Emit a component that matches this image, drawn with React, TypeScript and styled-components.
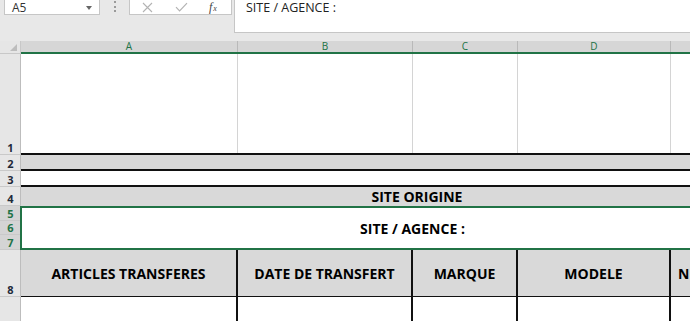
import React from 'react';
import styled, { createGlobalStyle } from 'styled-components';

const GlobalStyle = createGlobalStyle`
    html, body {
        margin: 0;
        padding: 0;
        background: #ffffff;
        overflow: hidden;
    }
    #root {
        width: 690px;
        height: 321px;
        overflow: hidden;
    }
`;

const COLS = [217, 175, 105, 153, 142, 120];
const GRID = COLS.map((w) => w + 'px').join(' ');
const HEAD_W = 21;
const GREEN = '#217346';

const Page = styled.div`
    width: 690px;
    height: 321px;
    overflow: hidden;
    font-family: "Open Sans", "Noto Sans", sans-serif;
`;

const TopBar = styled.div`
    height: 41px;
    background: #e8e8e8;
    display: flex;
    align-items: flex-start;
`;

const NameBox = styled.div`
    margin-left: 4px;
    width: 96px;
    height: 15px;
    box-sizing: border-box;
    background: #fff;
    border: 1px solid #c6c6c6;
    border-top: none;
    display: flex;
    align-items: center;
    justify-content: space-between;
    padding: 1px 6px 0 7px;
    font-size: 12px;
    line-height: 13px;
    color: #333;
`;

const Caret = styled.span`
    width: 0;
    height: 0;
    border-left: 3.5px solid transparent;
    border-right: 3.5px solid transparent;
    border-top: 4px solid #666;
    margin-right: 1px;
`;

const Dots = styled.div`
    width: 29px;
    height: 12px;
    display: flex;
    flex-direction: column;
    align-items: center;
    justify-content: space-between;
    padding-top: 1px;
    box-sizing: border-box;
    span {
        width: 2px;
        height: 2px;
        background: #9a9a9a;
    }
`;

const FxBox = styled.div`
    width: 103px;
    height: 15px;
    box-sizing: border-box;
    background: #fff;
    border: 1px solid #c6c6c6;
    border-top: none;
    display: flex;
    align-items: center;
    padding-left: 12px;
    gap: 22px;
`;

const Fx = styled.span`
    display: inline-flex;
    align-items: baseline;
    font-family: "Liberation Serif", "DejaVu Serif", serif;
    font-style: italic;
    font-size: 12px;
    line-height: 13px;
    color: #444;
    margin-left: -1px;
`;

const FxSub = styled.span`
    font-size: 8px;
    line-height: 8px;
    margin-left: 1px;
`;

const FormulaInput = styled.div`
    margin-left: 2px;
    flex: 1;
    height: 33px;
    box-sizing: border-box;
    background: #fff;
    border: 1px solid #c6c6c6;
    border-top: none;
    border-right: none;
    padding: 1px 0 0 11px;
    font-size: 12.5px;
    line-height: 13px;
    color: #222;
`;

const Sheet = styled.div`
    width: ${HEAD_W + COLS.reduce((a, b) => a + b, 0)}px;
`;

const Row = styled.div<{ $h: number }>`
    display: grid;
    grid-template-columns: ${HEAD_W}px 1fr;
    height: ${(p) => p.$h}px;
`;

const Corner = styled.div`
    background: #e6e6e6;
    border-right: 1px solid #c8c8c8;
    border-bottom: 1px solid #c8c8c8;
    box-sizing: border-box;
    position: relative;
    &::after {
        content: '';
        position: absolute;
        right: 3px;
        bottom: 2px;
        border-left: 7px solid transparent;
        border-bottom: 7px solid #bdbdbd;
    }
`;

const ColHeads = styled.div`
    display: grid;
    grid-template-columns: ${GRID};
    background: #d6d6d6;
    border-bottom: 2px solid ${GREEN};
`;

const ColHead = styled.div`
    border-right: 1px solid #b9b9b9;
    font-size: 10px;
    line-height: 11px;
    color: ${GREEN};
    text-align: center;
`;

const RowHead = styled.div<{ $sel?: boolean }>`
    flex: 1;
    display: flex;
    align-items: flex-end;
    justify-content: center;
    box-sizing: border-box;
    background: ${(p) => (p.$sel ? '#d4d4d4' : '#e6e6e6')};
    border-right: 1px solid #bdbdbd;
    border-bottom: 1px solid #c9c9c9;
    font-size: 11px;
    font-weight: 700;
    line-height: 13px;
    padding-left: 1px;
    color: ${(p) => (p.$sel ? GREEN : '#1f2a3a')};
`;

const HeadStack = styled.div`
    display: flex;
    flex-direction: column;
`;

const Cells = styled.div<{ $fill?: boolean; $bottom?: string }>`
    display: grid;
    grid-template-columns: ${GRID};
    box-sizing: border-box;
    background: ${(p) => (p.$fill ? '#d9d9d9' : '#fff')};
    border-bottom: ${(p) => p.$bottom || 'none'};
`;

const Cell = styled.div<{ $line?: string; $w?: number }>`
    box-sizing: border-box;
    border-right: ${(p) => p.$w || 1}px solid ${(p) => p.$line || '#d4d4d4'};
`;

const HeaderCell = styled.div`
    box-sizing: border-box;
    border-right: 2px solid #111;
    display: flex;
    align-items: center;
    justify-content: center;
    font-weight: 700;
    font-size: 14px;
    color: #000;
    white-space: nowrap;
    overflow: hidden;
`;

const Merged = styled.div<{ $span: number; $shift?: number }>`
    grid-column: 1 / span ${(p) => p.$span};
    display: flex;
    align-items: center;
    justify-content: center;
    padding-right: ${(p) => p.$shift || 0}px;
    font-weight: 700;
    font-size: 14px;
    color: #000;
    white-space: nowrap;
`;

const Selected = styled.div`
    box-sizing: border-box;
    margin-left: -1px;
    border: 2px solid ${GREEN};
    border-right: none;
    display: grid;
    grid-template-columns: ${GRID};
`;

const CrossIcon = () => (
    <svg width="11" height="11" viewBox="0 0 11 11">
        <path d="M1 1L10 10M10 1L1 10" stroke="#b3b3b3" strokeWidth="1.1" fill="none" />
    </svg>
);

const CheckIcon = () => (
    <svg width="13" height="10" viewBox="0 0 13 10">
        <path d="M1 5.2L4.6 8.8L12 1.2" stroke="#b3b3b3" strokeWidth="1.2" fill="none" />
    </svg>
);

const letters = ['A', 'B', 'C', 'D', '', ''];
const headers = ['ARTICLES TRANSFERES', 'DATE DE TRANSFERT', 'MARQUE', 'MODELE', 'NUMERO DE SERIE', ''];

const App: React.FC = () => {
    return (
        <Page>
            <GlobalStyle />
            <TopBar>
                <NameBox>
                    A5
                    <Caret />
                </NameBox>
                <Dots><span /><span /><span /></Dots>
                <FxBox>
                    <CrossIcon />
                    <CheckIcon />
                    <Fx>f<FxSub>x</FxSub></Fx>
                </FxBox>
                <FormulaInput>SITE / AGENCE :</FormulaInput>
            </TopBar>
            <Sheet>
                <Row $h={13}>
                    <Corner />
                    <ColHeads>
                        {letters.map((l, i) => <ColHead key={i}>{l}</ColHead>)}
                    </ColHeads>
                </Row>
                <Row $h={101}>
                    <HeadStack><RowHead>1</RowHead></HeadStack>
                    <Cells $bottom="2px solid #111">
                        {COLS.map((_, i) => <Cell key={i} />)}
                    </Cells>
                </Row>
                <Row $h={16}>
                    <HeadStack><RowHead>2</RowHead></HeadStack>
                    <Cells $fill $bottom="2px solid #111">
                        <Merged $span={5} />
                        <Cell />
                    </Cells>
                </Row>
                <Row $h={16}>
                    <HeadStack><RowHead>3</RowHead></HeadStack>
                    <Cells $bottom="2px solid #111">
                        <Merged $span={5} />
                        <Cell />
                    </Cells>
                </Row>
                <Row $h={19}>
                    <HeadStack><RowHead>4</RowHead></HeadStack>
                    <Cells $fill>
                        <Merged $span={5}>SITE ORIGINE</Merged>
                        <Cell />
                    </Cells>
                </Row>
                <Row $h={44}>
                    <HeadStack>
                        <RowHead $sel>5</RowHead>
                        <RowHead $sel>6</RowHead>
                        <RowHead $sel>7</RowHead>
                    </HeadStack>
                    <Selected>
                        <Merged $span={5} $shift={11}>SITE / AGENCE :</Merged>
                    </Selected>
                </Row>
                <Row $h={47}>
                    <HeadStack><RowHead>8</RowHead></HeadStack>
                    <Cells $fill $bottom="1px solid #111">
                        {headers.map((h, i) => <HeaderCell key={i}>{h}</HeaderCell>)}
                    </Cells>
                </Row>
                <Row $h={40}>
                    <HeadStack><RowHead>9</RowHead></HeadStack>
                    <Cells>
                        {COLS.map((_, i) => <Cell key={i} $line="#111" $w={2} />)}
                    </Cells>
                </Row>
            </Sheet>
        </Page>
    );
};

export default App;
